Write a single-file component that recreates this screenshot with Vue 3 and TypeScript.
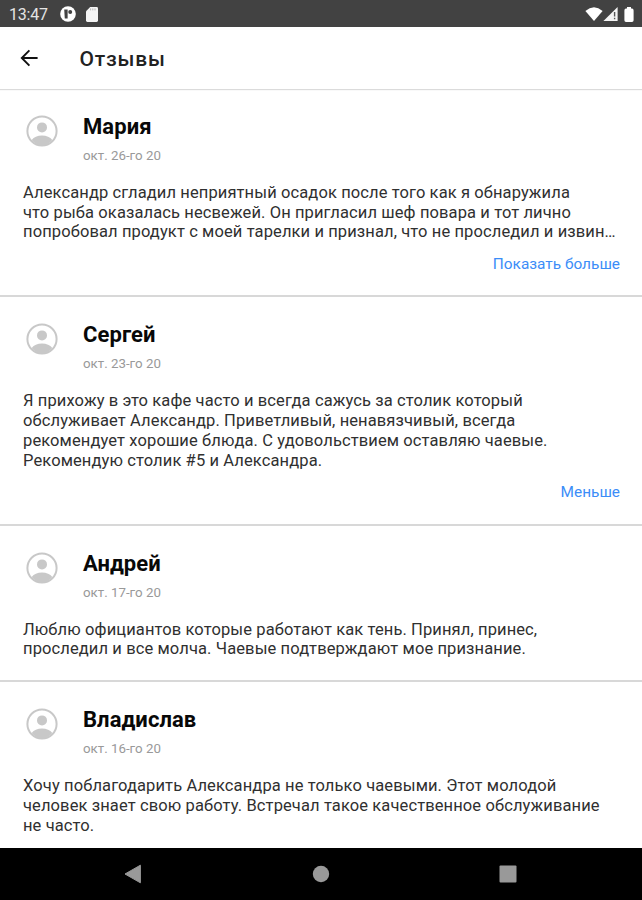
<script setup lang="ts">
interface Review {
  name: string
  date: string
  lines: string[]
  action?: string
}

const reviews: Review[] = [
  {
    name: 'Мария',
    date: 'окт. 26-го 20',
    lines: [
      'Александр сгладил неприятный осадок после того как я обнаружила',
      'что рыба оказалась несвежей. Он пригласил шеф повара и тот лично',
      'попробовал продукт с моей тарелки и признал, что не проследил и извин…',
    ],
    action: 'Показать больше',
  },
  {
    name: 'Сергей',
    date: 'окт. 23-го 20',
    lines: [
      'Я прихожу в это кафе часто и всегда сажусь за столик который',
      'обслуживает Александр. Приветливый, ненавязчивый, всегда',
      'рекомендует хорошие блюда. С удовольствием оставляю чаевые.',
      'Рекомендую столик #5 и Александра.',
    ],
    action: 'Меньше',
  },
  {
    name: 'Андрей',
    date: 'окт. 17-го 20',
    lines: [
      'Люблю официантов которые работают как тень. Принял, принес,',
      'проследил и все молча. Чаевые подтверждают мое признание.',
    ],
  },
  {
    name: 'Владислав',
    date: 'окт. 16-го 20',
    lines: [
      'Хочу поблагодарить Александра не только чаевыми. Этот молодой',
      'человек знает свою работу. Встречал такое качественное обслуживание',
      'не часто.',
    ],
  },
]
</script>

<template>
  <div class="screen">
    <div class="status">
      <span class="clock">13:47</span>
      <svg class="app-mark" viewBox="0 0 16 16">
        <circle cx="8" cy="8" r="7.8" fill="#fff" />
        <path d="M4.2 3.6h3.4v8.8H4.8z" fill="#424242" />
        <circle cx="10.2" cy="6" r="2" fill="#424242" />
      </svg>
      <svg class="sd" viewBox="0 0 12 15">
        <path d="M4.2 0H10.6Q12 0 12 1.4V13.6Q12 15 10.6 15H1.4Q0 15 0 13.6V4.3z" fill="#f4f4f4" />
        <path d="M4.6 1.4v2M6.8 1.4v2M9 1.4v2" stroke="#aaa" stroke-width=".8" />
      </svg>
      <div class="signals">
        <svg width="18" height="14" viewBox="0 0 18 14">
          <path d="M.4 4Q9-3.4 17.6 4L9 14z" fill="#fff" />
        </svg>
        <svg class="cell" width="15" height="14" viewBox="0 0 15 14">
          <path d="M14.6 0V14H.4z" fill="#f4f4f4" />
          <path d="M11.6 5v4.6M11.6 10.8v1.4" stroke="#555" stroke-width="1.4" />
        </svg>
        <svg class="battery" width="10" height="15" viewBox="0 0 10 15">
          <path d="M3 0h4v1.4h1Q9.6 1.6 9.6 3.4v9.8Q9.6 15 8 15H2Q.4 15 .4 13.2V3.4Q.4 1.6 2 1.4H3z" fill="#fff" />
        </svg>
      </div>
    </div>

    <header class="header">
      <svg class="back" viewBox="0 0 18 18">
        <path d="M17.6 9H2.2M9.4 1.4L1.8 9L9.4 16.6" fill="none" stroke="#111" stroke-width="1.9" />
      </svg>
      <h1>Отзывы</h1>
    </header>

    <main class="list">
      <article v-for="review in reviews" :key="review.name" class="card">
        <div class="author">
          <svg class="avatar" viewBox="0 0 32 32">
            <circle cx="16" cy="16" r="14.6" fill="#fff" stroke="#c8c8c8" stroke-width="2" />
            <circle cx="16" cy="12.4" r="5" fill="#c8c8c8" />
            <path d="M5.7 25Q9 20.5 16 20.5T26.3 25Q22 30.4 16 30.4T5.7 25z" fill="#c8c8c8" />
          </svg>
          <div>
            <h2>{{ review.name }}</h2>
            <time>{{ review.date }}</time>
          </div>
        </div>
        <p class="body">
          <span v-for="line in review.lines" :key="line" class="line">{{ line }}</span>
        </p>
        <a v-if="review.action" class="action">{{ review.action }}</a>
      </article>
    </main>

    <nav class="nav">
      <svg width="18" height="20" viewBox="0 0 18 20"><path d="M16.4 1.2V18.8L1 10z" fill="#999" stroke="#999" stroke-linejoin="round" /></svg>
      <svg width="18" height="20" viewBox="0 0 18 20"><circle cx="9" cy="10" r="8.2" fill="#999" /></svg>
      <svg width="18" height="20" viewBox="0 0 18 20"><rect x=".5" y="1.5" width="17" height="17" rx="1" fill="#999" /></svg>
    </nav>
  </div>
</template>

<style>
body {
  margin: 0;
}
</style>

<style scoped>
.screen {
  display: flex;
  flex-direction: column;
  width: 642px;
  height: 900px;
  overflow: hidden;
  background: #fff;
  font-family: Roboto, "Noto Sans", sans-serif;
}
.status {
  display: flex;
  align-items: center;
  flex: none;
  box-sizing: border-box;
  height: 27px;
  padding: 1px 8px 0 9px;
  background: #424242;
}
.clock {
  width: 51px;
  color: #e4e4e4;
  font-size: 16px;
  letter-spacing: -0.2px;
}
.app-mark {
  width: 16px;
  height: 16px;
}
.sd {
  width: 12px;
  height: 15px;
  margin-left: 10px;
}
.signals {
  display: flex;
  align-items: center;
  margin-left: auto;
}
.battery {
  margin-left: 6px;
}
.header {
  display: flex;
  align-items: center;
  flex: none;
  box-sizing: border-box;
  height: 62px;
  padding-left: 20px;
  box-shadow: 0 1px 1px rgba(0, 0, 0, 0.14);
}
.back {
  width: 18px;
  height: 18px;
  margin-right: 41.5px;
}
h1 {
  margin: 2px 0 0;
  color: #222;
  font-size: 21px;
  font-weight: 500;
  line-height: 26px;
  letter-spacing: 0.8px;
}
.list {
  flex: 1;
  min-height: 0;
  overflow: hidden;
}
.card {
  box-sizing: border-box;
  padding: 25px 22px 21.3px 23px;
  border-bottom: 2px solid #d8d8d8;
}
.author {
  display: flex;
  height: 69px;
}
.avatar {
  flex: none;
  width: 32px;
  height: 32px;
  margin: 1px 25px 0 3px;
}
h2 {
  margin: 0;
  color: #080808;
  font-size: 22px;
  font-weight: 700;
  line-height: 26px;
  letter-spacing: 0.08px;
}
time {
  display: block;
  margin-top: 8px;
  color: #999;
  font-size: 13.3px;
  line-height: 16px;
}
.body {
  margin: 0;
  color: #303030;
  font-size: 16.5px;
  line-height: 19.7px;
  letter-spacing: 0.11px;
}
.line {
  display: block;
  white-space: nowrap;
}
.action {
  display: block;
  margin: 12px 0 0;
  color: #3b8df8;
  font-size: 15.4px;
  line-height: 20px;
  text-align: right;
}
.nav {
  display: flex;
  flex: none;
  justify-content: space-between;
  align-items: center;
  box-sizing: border-box;
  height: 52px;
  padding: 0 125px 0 124px;
  background: #000;
}
</style>
